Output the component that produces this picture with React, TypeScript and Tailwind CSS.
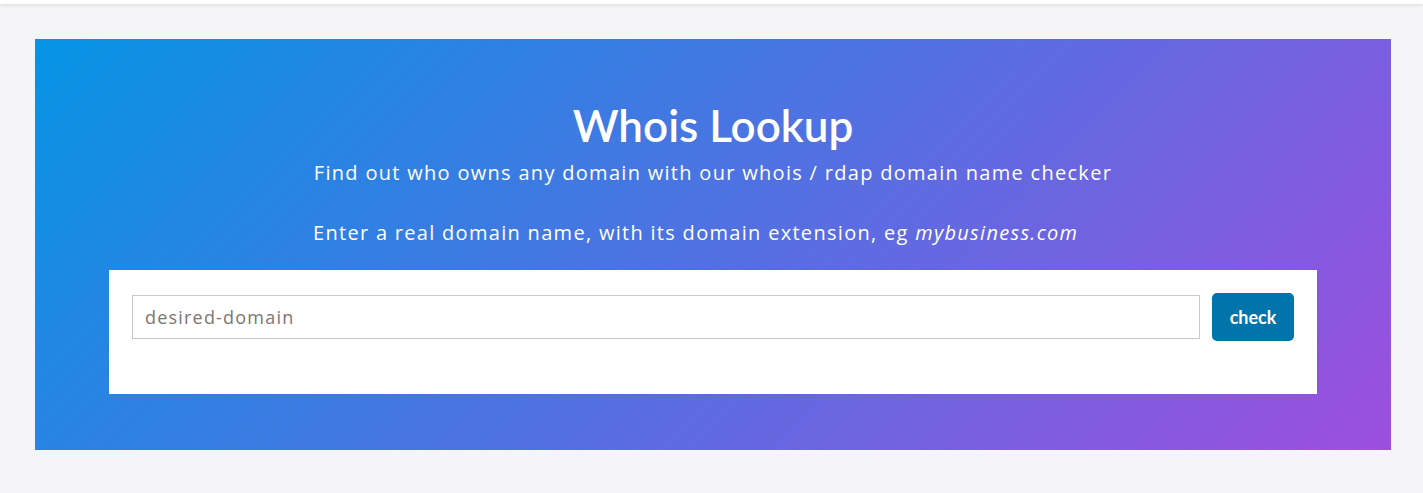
export default function App() {
  return (
    <div className="min-h-[493px] bg-[#f5f5f7] font-['Open_Sans',sans-serif]">
      <div className="h-1 bg-white shadow-[0_1px_4px_rgba(0,0,0,0.12)]" />
      <div className="pl-[35px] pr-[32px] pt-[35px] pb-[43px]">
        <section className="bg-[linear-gradient(135deg,#0594e5,#9d4ede)] px-[74px] pt-[56px] pb-[56px] text-white">
          <h1 className="text-center font-['Lato',sans-serif] text-[44px] font-semibold leading-[60px]">
            Whois Lookup
          </h1>
          <div className="mx-auto w-[800px] text-[20px] leading-[28px] tracking-[1.3px]">
            <p className="mt-[4px] whitespace-nowrap text-center">
              Find out who owns any domain with our whois / rdap domain name checker
            </p>
            <p className="mt-[32px] whitespace-nowrap">
              Enter a real domain name, with its domain extension, eg <em>mybusiness.com</em>
            </p>
          </div>
          <div className="mt-[23px] h-[124px] bg-white px-[23px] pt-[23px]">
            <div className="flex items-center gap-3">
              <input
                type="text"
                placeholder="desired-domain"
                className="h-[44px] min-w-0 flex-1 border border-[#c8c8c8] px-3 text-[18px] tracking-[1.2px] text-[#333] placeholder:text-[#7a7673] outline-none"
              />
              <button className="h-[48px] w-[82px] rounded-[5px] bg-[#0274ac] font-['Lato',sans-serif] text-[18px] font-bold text-white">
                check
              </button>
            </div>
          </div>
        </section>
      </div>
    </div>
  );
}
